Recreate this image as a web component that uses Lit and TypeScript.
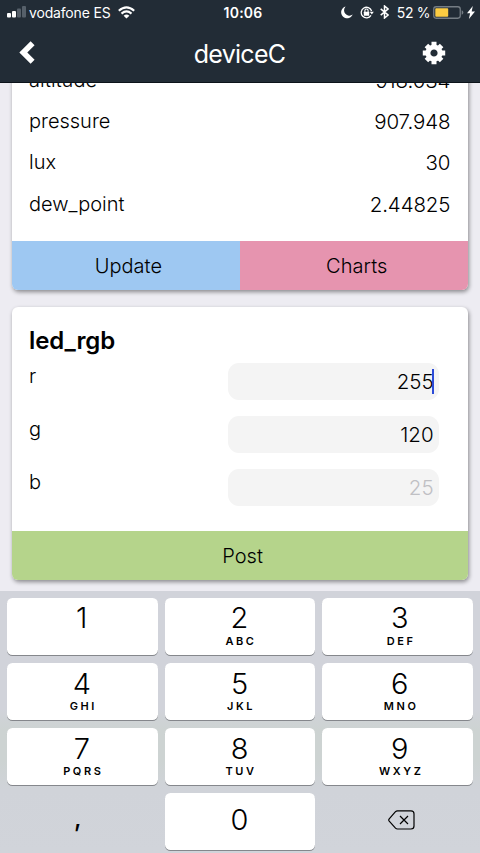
import { LitElement, html, css, nothing } from "lit";
import { customElement, property } from "lit/decorators.js";

const FONT = css`Inter, Roboto, "Liberation Sans", sans-serif`;

@customElement("status-bar")
class StatusBar extends LitElement {
  static styles = css`
    :host { display: flex; height: 24px; align-items: center; color: #fff; font: 400 14px/24px ${FONT}; }
    .side { display: flex; align-items: center; flex: 1; height: 24px; }
    .left { padding-left: 7px; }
    .right { justify-content: flex-end; padding-right: 5px; }
    .time { font-weight: 600; font-size: 14px; letter-spacing: 0.2px; margin: 1px -2px 0 2px; }
    .carrier { margin: 1px 7px 0 3px; letter-spacing: -0.17px; white-space: pre; }
    .percent { margin: 1px 3px 0 8px; letter-spacing: -0.4px; white-space: pre; }
    .moon { margin-right: 7px; }
    .lock { margin-right: 6px; }
    .bolt { margin-left: 3px; }
    svg { display: block; flex: none; }
  `;
  render() {
    return html`
      <div class="side left">
        <svg width="19" height="12" viewBox="0 0 19 12">
          <rect x="0" y="7" width="4" height="4.500" rx="1" fill="#fff" />
          <rect x="5" y="5" width="4" height="6.500" rx="1" fill="#fff" />
          <rect x="10" y="2.500" width="4" height="9" rx="1" fill="#56606a" />
          <rect x="15" y="0" width="4" height="11.500" rx="1" fill="#56606a" />
        </svg>
        <span class="carrier">vodafone ES</span>
        <svg width="17" height="13" viewBox="0 0 17 13" fill="none" stroke="#fff" stroke-width="2.100">
          <path d="M.8 4.800Q8.500-2.100 16.200 4.800" />
          <path d="M3.500 7.600Q8.500 3.300 13.500 7.600" />
          <path d="M8.500 12.600L5.600 9.700Q8.500 7.300 11.400 9.700Z" fill="#fff" stroke="none" />
        </svg>
      </div>
      <span class="time">10:06</span>
      <div class="side right">
        <svg class="moon" width="12" height="13" viewBox="0 0 12 13">
          <path d="M4.600.5A6 6 0 1 0 11.700 8.600 5.400 5.400 0 0 1 4.600.5Z" fill="#fff" />
        </svg>
        <svg class="lock" width="14" height="13" viewBox="0 0 14 13" fill="none" stroke="#fff">
          <path d="M11.600 5A5.300 5.300 0 1 0 11 9.400" stroke-width="1.300" />
          <path d="M9.700 5.800H13.800L11.800 8.600Z" fill="#fff" stroke="none" />
          <rect x="3.800" y="5.700" width="5.400" height="4" rx=".5" fill="#fff" stroke="none" />
          <path d="M4.900 6V4.600a1.600 1.600 0 0 1 3.200 0V6" stroke-width="1.100" />
        </svg>
        <svg width="9" height="14" viewBox="0 0 9 14" fill="none" stroke="#fff" stroke-width="1.500">
          <path d="M.7 3.900L8 10 4.500 13V1L8 4 .7 10.100" />
        </svg>
        <span class="percent">52 %</span>
        <svg width="31" height="13" viewBox="0 0 31 13">
          <rect x=".75" y=".75" width="26.500" height="11.500" rx="2.400" fill="none" stroke="#757d84" stroke-width="1.300" />
          <rect x="2.300" y="2.200" width="12.900" height="8.600" rx=".8" fill="#fccc42" />
          <path d="M28.700 4.200q1.600.5 1.600 2.300t-1.600 2.300z" fill="#757d84" />
        </svg>
        <svg class="bolt" width="8" height="13" viewBox="0 0 8 13">
          <path d="M5.800 0L0 7.200h3.100L1.900 13 8 5.500H4.700Z" fill="#fff" />
        </svg>
      </div>
    `;
  }
}

@customElement("nav-header")
class NavHeader extends LitElement {
  @property() heading = "";
  static styles = css`
    :host { display: flex; height: 58px; align-items: center; justify-content: space-between; padding: 0 34px 0 18px; box-sizing: border-box; color: #fff; }
    .title { font: 400 25px/58px ${FONT}; letter-spacing: -0.72px; margin: 2px 0 0 11px; }
    svg { display: block; }
  `;
  render() {
    return html`
      <svg width="28" height="26" viewBox="0 0 28 26">
        <path d="M14.600 3.200L5.300 12.500 14.600 21.800" fill="none" stroke="#fff" stroke-width="5.600" />
      </svg>
      <span class="title">${this.heading}</span>
      <svg width="24" height="24" viewBox="-12 -12 24 24">
        <g stroke="#fff" stroke-width="5" stroke-linejoin="round">
          <circle r="6.100" fill="none" />
          <path d="M0-11.200V-7M0 7V11.200M-11.200 0H-7M7 0H11.200M-7.600-7.600L-5.500-5.500M5.500 5.500L7.600 7.600M7.600-7.600L5.500-5.500M-5.500 5.500L-7.600 7.600" />
        </g>
      </svg>
    `;
  }
}

@customElement("device-card")
class DeviceCard extends LitElement {
  static styles = css`
    :host { display: flex; flex-direction: column; background: #fff; border-radius: 6px; overflow: hidden; box-shadow: 1px 2px 4px rgba(0, 0, 0, 0.42); }
    .body { flex: 1; min-height: 0; padding: 0 18px 0 17.3px; }
    .actions { display: flex; height: 49px; flex: none; }
  `;
  render() {
    return html`<div class="body"><slot></slot></div><div class="actions"><slot name="action"></slot></div>`;
  }
}

@customElement("key-pad")
class KeyPad extends LitElement {
  static styles = css`
    :host { display: grid; grid-template-columns: repeat(3, 1fr); grid-auto-rows: 57px; gap: 8px 7px; height: 262px; box-sizing: border-box; padding: 7px 7px 0; background: linear-gradient(#d1d3da 0, #d1d3da 45%, #cdd3d2 53%, #cdd3d2 65%, #d0d3d9 76%, #d1d4da 100%); color: #000; font-family: ${FONT}; }
    .key { display: flex; flex-direction: column; align-items: center; background: #fff; border-radius: 5.5px; box-shadow: 0 1px 0.5px #85878c; }
    .key:nth-child(3n) { padding-left: 5px; }
    .plain { background: none; box-shadow: none; }
    .digit { font-size: 29px; line-height: 34px; margin-top: 4px; font-weight: 300; margin-right: 1px; }
    .key:nth-child(-n + 3) .digit { margin-top: 3px; margin-bottom: 1px; }
    .letters { font-size: 11px; line-height: 12px; font-weight: 600; letter-spacing: 2.6px; margin: -1px -2px 0 0; }
    .key .zero { margin-top: 10px; }
    .comma { font-size: 25px; line-height: 34px; margin-top: 8px; margin-right: 9px; font-weight: 500; }
    .erase { justify-content: center; }
    svg { display: block; margin: -4px 0 0 2px; }
  `;
  render() {
    const keys = [["1", ""], ["2", "ABC"], ["3", "DEF"], ["4", "GHI"], ["5", "JKL"], ["6", "MNO"], ["7", "PQRS"], ["8", "TUV"], ["9", "WXYZ"]];
    return html`
      ${keys.map(([d, l]) => html`<div class="key"><span class="digit">${d}</span>${l ? html`<span class="letters">${l}</span>` : nothing}</div>`)}
      <div class="key plain"><span class="comma">,</span></div>
      <div class="key"><span class="digit zero">0</span></div>
      <div class="key plain erase">
        <svg width="27" height="20" viewBox="0 0 27 20" fill="none" stroke="#000" stroke-width="1.200" stroke-linejoin="round">
          <path d="M9.500.8H23Q26 .8 26 3.800V16Q26 19 23 19H9.500Q8.300 19 7.500 18.200L1.200 11.200Q.3 10 1.200 8.800L7.500 1.600Q8.300.8 9.500.8Z" />
          <path d="M12 6l8 8M20 6l-8 8" />
        </svg>
      </div>
    `;
  }
}

@customElement("app-root")
class AppRoot extends LitElement {
  static styles = css`
    :host { display: flex; flex-direction: column; width: 480px; height: 853px; overflow: hidden; background: #edecf2; color: #000; font: 400 20px/41.3px ${FONT}; }
    .top { flex: none; height: 82px; background: #222c36; border-bottom: 1px solid #0c131a; }
    .scroll { flex: none; height: 508px; overflow: hidden; display: flex; flex-direction: column; gap: 17px; padding: 0 11.6px 0 11.7px; box-sizing: border-box; }
    .readings { height: 231px; margin-top: -24px; flex: none; }
    .led { height: 273px; flex: none; }
    .row { display: flex; justify-content: space-between; font-weight: 300; }
    .list { padding-top: 0.8px; }
    .name { letter-spacing: 0; }
    .value { font-size: 20.5px; letter-spacing: -0.1px; }
    .action { flex: 1; text-align: center; line-height: 50px; font-weight: 300; letter-spacing: 0.05px; }
    .update { background: #9ec8f2; padding-left: 5px; }
    .charts { background: #e694af; padding-left: 5px; }
    .post { background: #b5d48b; padding-left: 5px; }
    .heading { font-weight: 600; font-size: 24px; line-height: 32px; padding-top: 18px; height: 38px; letter-spacing: -0.1px; }
    .field { display: flex; justify-content: space-between; height: 53px; padding-right: 11.3px; font-weight: 300; }
    .label { line-height: 27px; }
    .input { width: 211px; height: 37px; box-sizing: border-box; border-radius: 11px; background: #f4f4f4; text-align: right; padding-right: 5.5px; line-height: 38px; font-size: 20.5px; }
    .focus { position: relative; }
    .caret { position: absolute; right: 5.5px; top: 6px; width: 1.6px; height: 25px; background: #2c4bd8; }
    .hint { color: #c0c0c4; }
  `;
  render() {
    const rows = [["altitude", "918.034"], ["pressure", "907.948"], ["lux", "30"], ["dew_point", "2.44825"]];
    return html`
      <div class="top"><status-bar></status-bar><nav-header heading="deviceC"></nav-header></div>
      <div class="scroll">
        <device-card class="readings">
          <div class="list">${rows.map(([n, v]) => html`<div class="row"><span class="name">${n}</span><span class="value">${v}</span></div>`)}</div>
          <span slot="action" class="action update">Update</span>
          <span slot="action" class="action charts">Charts</span>
        </device-card>
        <device-card class="led">
          <div class="heading">led_rgb</div>
          <div class="field"><span class="label">r</span><div class="input focus">255<i class="caret"></i></div></div>
          <div class="field"><span class="label">g</span><div class="input">120</div></div>
          <div class="field"><span class="label">b</span><div class="input hint">25</div></div>
          <span slot="action" class="action post">Post</span>
        </device-card>
      </div>
      <key-pad></key-pad>
    `;
  }
}
